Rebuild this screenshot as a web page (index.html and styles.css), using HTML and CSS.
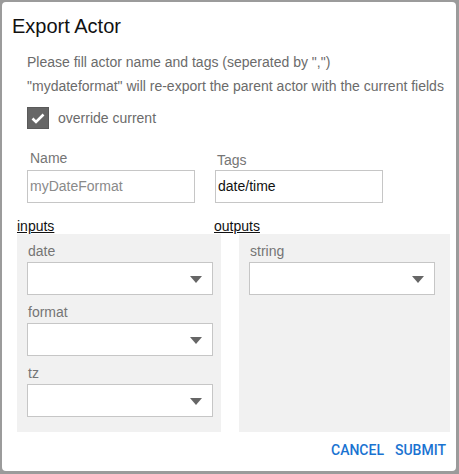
FILE: index.html
```html
<!DOCTYPE html>
<html>
<head>
<meta charset="utf-8">
<link rel="stylesheet" href="styles.css">
</head>
<body>
<div class="dialog">
  <h2 class="title">Export Actor</h2>
  <div class="content">
    <p class="desc">Please fill actor name and tags (seperated by ",")</p>
    <p class="desc">"mydateformat" will re-export the parent actor with the current fields</p>
    <label class="check">
      <span class="box"><svg width="14" height="11" viewBox="0 0 14 11"><path d="M1.5 5.5 L5 9 L12.5 1.5" fill="none" stroke="#fff" stroke-width="2.6"/></svg></span>
      <span class="check-text">override current</span>
    </label>
    <div class="fields">
      <div class="field field-name">
        <div class="field-label">Name</div>
        <div class="text-input disabled">myDateFormat</div>
      </div>
      <div class="field field-tags">
        <div class="field-label">Tags</div>
        <div class="text-input">date/time</div>
      </div>
    </div>
  </div>
  <div class="io-heads">
    <a class="io-head head-in">inputs</a>
    <a class="io-head head-out">outputs</a>
  </div>
  <div class="io-panels">
    <div class="panel panel-in">
      <div class="group"><div class="group-label">date</div><div class="select"><span class="arrow"></span></div></div>
      <div class="group"><div class="group-label">format</div><div class="select"><span class="arrow"></span></div></div>
      <div class="group"><div class="group-label">tz</div><div class="select"><span class="arrow"></span></div></div>
    </div>
    <div class="panel panel-out">
      <div class="group"><div class="group-label">string</div><div class="select"><span class="arrow"></span></div></div>
    </div>
  </div>
  <div class="actions">
    <button class="btn">CANCEL</button>
    <button class="btn">SUBMIT</button>
  </div>
</div>
</body>
</html>
```
FILE: styles.css
```css
html, body {
  margin: 0;
  padding: 0;
}
body {
  background: #9b9b9b;
  width: 459px;
  height: 474px;
  padding: 2px 3px 3px 2px;
  box-sizing: border-box;
  font-family: "Liberation Sans", Arial, sans-serif;
  overflow: hidden;
}
.dialog {
  background: #fff;
  border-radius: 4px;
  height: 469px;
  box-sizing: border-box;
  display: flex;
  flex-direction: column;
}
.title {
  margin: 0;
  padding: 12px 0 0 10px;
  font-size: 20px;
  font-weight: normal;
  line-height: 24px;
  color: #111;
}
.content {
  padding: 0 0 0 25px;
}
.desc {
  margin: 0;
  font-size: 14px;
  line-height: 16px;
  color: #6b6b6b;
}
.content .desc:first-child {
  margin-top: 16px;
}
.desc + .desc {
  margin-top: 8px;
}
.check {
  display: flex;
  align-items: center;
  margin-top: 13px;
  height: 22px;
}
.box {
  width: 22px;
  height: 22px;
  background: #666;
  border: 1px solid #5a5a5a;
  box-sizing: border-box;
  display: flex;
  align-items: center;
  justify-content: center;
}
.check-text {
  margin-left: 9px;
  font-size: 14px;
  color: #6b6b6b;
}
.fields {
  display: flex;
  margin-top: 20px;
}
.field-name {
  width: 168px;
}
.field-tags {
  width: 168px;
  margin-left: 20px;
}
.field-label {
  font-size: 14px;
  line-height: 16px;
  color: #757575;
  padding-left: 3px;
  padding-top: 1px;
  height: 20px;
}
.field-tags .field-label {
  padding-left: 2px;
  padding-top: 3px;
  height: 18px;
}
.text-input {
  height: 33px;
  border: 1px solid #c6c6c6;
  box-sizing: border-box;
  font-size: 14px;
  line-height: 31px;
  padding-left: 2px;
  color: #111;
}
.text-input.disabled {
  color: #8a8a8a;
}
.io-heads {
  display: flex;
  padding-left: 15px;
  margin-top: 16px;
}
.io-head {
  font-size: 14px;
  line-height: 15px;
  color: #111;
  text-decoration: underline;
}
.head-in {
  width: 197px;
}
.io-panels {
  display: flex;
  padding-left: 15px;
}
.panel {
  background: #f1f1f1;
  padding: 0 0 15px 10px;
  flex: none;
}
.panel-in {
  width: 186px;
  padding-right: 8px;
}
.panel-out {
  width: 186px;
  margin-left: 18px;
  padding-right: 15px;
}
.group {
  padding-top: 8px;
}
.group-label {
  font-size: 14px;
  line-height: 18px;
  color: #757575;
  padding-left: 1px;
  margin-bottom: 2px;
}
.select {
  height: 33px;
  width: 186px;
  background: #fff;
  border: 1px solid #c6c6c6;
  box-sizing: border-box;
  display: flex;
  align-items: center;
  justify-content: flex-end;
  padding-right: 10px;
}
.arrow {
  width: 0;
  height: 0;
  border-left: 6px solid transparent;
  border-right: 6px solid transparent;
  border-top: 7px solid #666;
  margin-top: 2px;
}
.actions {
  display: flex;
  justify-content: flex-end;
  gap: 11px;
  padding: 10px 10px 0 0;
}
.btn {
  background: none;
  border: none;
  padding: 0;
  font-family: Roboto, "Liberation Sans", sans-serif;
  font-weight: 500;
  font-size: 14px;
  line-height: 16px;
  color: #1a73d1;
}
```
